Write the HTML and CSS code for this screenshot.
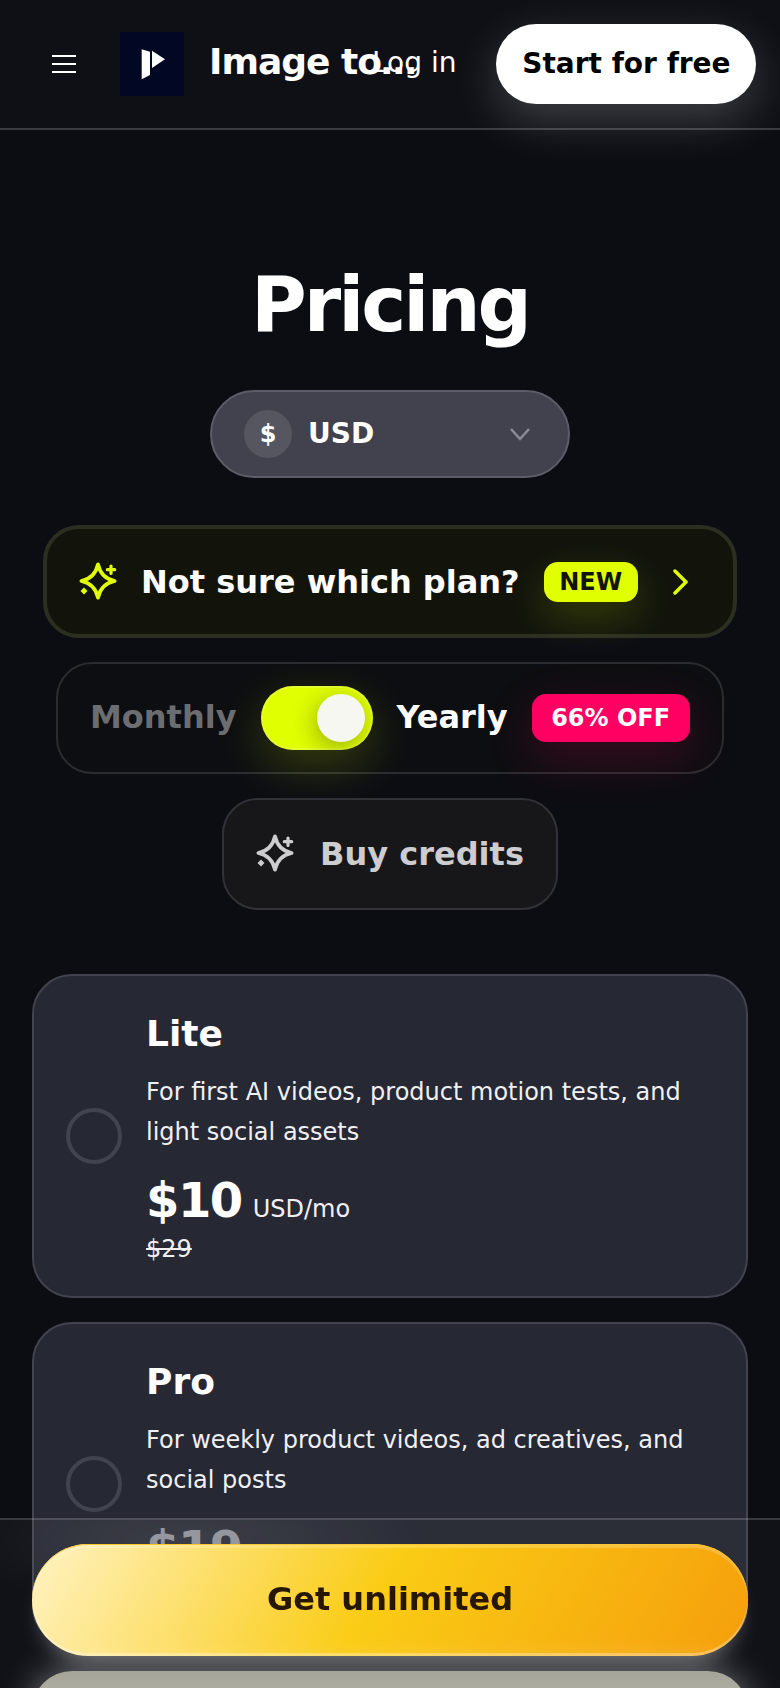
FILE: index.html
```html
<!DOCTYPE html>
<html>
<head>
  <title>Pricing</title>
  <link rel="stylesheet" href="styles.css">
</head>
<body>

  <header class="site-header">
    <div class="header-left">
      <button class="menu-btn" aria-label="Menu">
        <span></span><span></span><span></span>
      </button>
      <div class="logo">
        <svg width="36" height="36" viewBox="0 0 36 36">
          <path d="M7.700 3.300L16 5.700V29L7.700 33.300z" fill="#fff"/>
          <path d="M18 4.700L31 13.300 18 22z" fill="#fff"/>
        </svg>
      </div>
      <span class="brand">Image to video</span>
    </div>
    <div class="header-right">
      <a class="login">Log in</a>
      <a class="start-btn">Start for free</a>
    </div>
  </header>

  <main class="pricing">
    <h1>Pricing</h1>

    <div class="currency">
      <span class="currency-sign">$</span>
      <span class="currency-code">USD</span>
      <svg class="currency-arrow" width="24" height="14" viewBox="0 0 24 14">
        <path d="M3 2l9 10 9-10" fill="none" stroke="#8b8c95" stroke-width="2.500"/>
      </svg>
    </div>

    <div class="plan-finder">
      <svg class="sparkle" width="40" height="40" viewBox="0 0 40 40">
        <path d="M19 2.400C21 11.500 26.500 17 35.600 19 26.500 21 21 26.500 19 35.600 17 26.500 11.500 21 2.400 19 11.500 17 17 11.500 19 2.400Z" fill="none" stroke="currentColor" stroke-width="3.800" stroke-linejoin="round"/>
        <path d="M32 4v7.400M28.300 7.700h7.400" stroke="currentColor" stroke-width="3.200" stroke-linecap="round"/>
        <path d="M5 25.500L8.500 29 5 32.500 1.500 29z" fill="currentColor"/>
      </svg>
      <span class="plan-finder-text">Not sure which plan?</span>
      <span class="new-badge">NEW</span>
      <svg class="plan-finder-arrow" width="16" height="26" viewBox="0 0 16 26">
        <path d="M2 2l11 11L2 24" fill="none" stroke="#e0ff00" stroke-width="3.500" stroke-linecap="round" stroke-linejoin="round"/>
      </svg>
    </div>

    <div class="billing">
      <span class="billing-off">Monthly</span>
      <span class="toggle"><span class="toggle-knob"></span></span>
      <span class="billing-on">Yearly</span>
      <span class="off-badge">66% OFF</span>
    </div>

    <div class="credits">
      <svg class="sparkle" width="40" height="40" viewBox="0 0 40 40">
        <path d="M19 2.400C21 11.500 26.500 17 35.600 19 26.500 21 21 26.500 19 35.600 17 26.500 11.500 21 2.400 19 11.500 17 17 11.500 19 2.400Z" fill="none" stroke="currentColor" stroke-width="3.800" stroke-linejoin="round"/>
        <path d="M32 4v7.400M28.300 7.700h7.400" stroke="currentColor" stroke-width="3.200" stroke-linecap="round"/>
        <path d="M5 25.500L8.500 29 5 32.500 1.500 29z" fill="currentColor"/>
      </svg>
      <span>Buy credits</span>
    </div>

    <section class="plans">
      <div class="plan">
        <span class="radio"></span>
        <div class="plan-body">
          <h3>Lite</h3>
          <p>For first AI videos, product motion tests, and light social assets</p>
          <div class="price"><strong>$10</strong> <span>USD/mo</span></div>
          <div class="old-price">$29</div>
        </div>
      </div>
      <div class="plan plan-covered">
        <span class="radio"></span>
        <div class="plan-body">
          <h3>Pro</h3>
          <p>For weekly product videos, ad creatives, and social posts</p>
          <div class="price"><strong>$19</strong> <span>USD/mo</span></div>
        </div>
      </div>
    </section>
  </main>

  <!-- Sticky checkout bar -->
  <div class="checkout-bar">
    <a class="unlimited-btn">Get unlimited</a>
    <div class="second-btn"></div>
  </div>

</body>
</html>
```

FILE: styles.css
```css
* {
  box-sizing: border-box;
}

html, body {
  height: 1688px;
  overflow: hidden;
}

body {
  margin: 0;
  font-family: "DejaVu Sans", sans-serif;
  color: #fff;
  background: #0c0d13;
}

.site-header {
  height: 130px;
  padding: 24px 24px 24px 52px;
  display: flex;
  align-items: flex-start;
  justify-content: space-between;
  background: #0f1016;
  border-bottom: 2px solid #3a3b42;
}

.header-left {
  display: flex;
  align-items: center;
  width: 368px;
  margin-right: -48px;
  padding-top: 8px;
}

.menu-btn {
  width: 24px;
  padding: 0;
  margin-right: 44px;
  background: none;
  border: none;
  display: flex;
  flex-direction: column;
  gap: 6px;
}

.menu-btn span {
  height: 2px;
  background: #fff;
}

.logo {
  width: 64px;
  height: 64px;
  flex: none;
  background: #020824;
  display: flex;
  align-items: center;
  justify-content: center;
  margin-right: 25px;
}

.brand {
  flex: 1;
  min-width: 0;
  font-size: 36px;
  font-weight: 700;
  letter-spacing: -1px;
  margin-top: -5px;
  white-space: nowrap;
  overflow: hidden;
  text-overflow: ellipsis;
}

.header-right {
  display: flex;
  align-items: center;
  gap: 40px;
  flex: none;
}

.login {
  font-size: 28px;
  margin-top: -3px;
}

.start-btn {
  width: 260px;
  height: 80px;
  padding-bottom: 2px;
  display: flex;
  align-items: center;
  justify-content: center;
  background: #fff;
  color: #000;
  border-radius: 40px;
  font-size: 28px;
  font-weight: 700;
  box-shadow: 0 16px 48px rgba(255,255,255,0.2);
}

.pricing {
  padding: 0 32px;
  display: flex;
  flex-direction: column;
  align-items: center;
}

h1 {
  margin: 130px 0 40px;
  font-size: 76px;
  line-height: 90px;
  font-weight: 700;
  letter-spacing: -3px;
}

.currency {
  width: 360px;
  height: 88px;
  padding: 0 36px 0 32px;
  display: flex;
  align-items: center;
  background: #41424e;
  border: 2px solid #5c5d68;
  border-radius: 44px;
}

.currency-sign {
  width: 48px;
  height: 48px;
  margin-right: 16px;
  border-radius: 50%;
  background: #55565f;
  display: flex;
  align-items: center;
  justify-content: center;
  font-size: 24px;
  font-weight: 700;
}

.currency-code {
  flex: 1;
  font-size: 28px;
  font-weight: 700;
  margin-top: -2px;
}

.plan-finder {
  width: 694px;
  height: 113px;
  margin-top: 47px;
  padding: 0 32px;
  display: flex;
  align-items: center;
  background: #12140c;
  border: 4px solid #2c2e20;
  border-radius: 36px;
  color: #e0ff00;
}

.sparkle {
  flex: none;
}

.plan-finder-text {
  margin-left: 22px;
  font-size: 32px;
  font-weight: 700;
  color: #fff;
  white-space: nowrap;
}

.new-badge {
  width: 94px;
  height: 40px;
  margin-left: 24px;
  display: flex;
  align-items: center;
  justify-content: center;
  background: #e0ff00;
  color: #12140c;
  border-radius: 14px;
  font-size: 24px;
  font-weight: 700;
  box-shadow: 0 16px 40px rgba(224,255,0,0.18);
}

.plan-finder-arrow {
  margin-left: 35px;
}

.billing {
  width: 668px;
  height: 112px;
  margin-top: 24px;
  padding: 0 32px;
  display: flex;
  align-items: center;
  background: #0d0e11;
  border: 2px solid #2b2c30;
  border-radius: 36px;
  font-size: 32px;
  font-weight: 700;
}

.billing-off {
  margin-top: -2px;
  color: #6c6d71;
}

.billing-on {
  margin-top: -2px;
}

.toggle {
  width: 112px;
  height: 64px;
  margin: 0 24px;
  padding: 8px;
  display: flex;
  justify-content: flex-end;
  overflow: hidden;
  background: #e0ff00;
  border-radius: 32px;
  box-shadow: 0 16px 48px rgba(224,255,0,0.2), inset 0 0 0 2px rgba(255,255,255,0.18);
}

.toggle-knob {
  width: 48px;
  height: 48px;
  border-radius: 50%;
  background: #f6f7f1;
  box-shadow: -2px 6px 24px rgba(0,0,0,0.32);
}

.off-badge {
  width: 158px;
  height: 48px;
  margin-left: 24px;
  display: flex;
  align-items: center;
  justify-content: center;
  background: #ff0062;
  border-radius: 14px;
  font-size: 24px;
  box-shadow: 0 16px 48px rgba(255,0,98,0.2);
}

.credits {
  height: 112px;
  width: 336px;
  margin-top: 24px;
  display: flex;
  align-items: center;
  justify-content: center;
  gap: 24px;
  background: #17171a;
  border: 2px solid #323236;
  border-radius: 36px;
  color: #cdcdd0;
  font-size: 32px;
  font-weight: 700;
}

.plans {
  width: 100%;
  margin-top: 64px;
  display: flex;
  flex-direction: column;
  gap: 24px;
}

.plan {
  min-height: 324px;
  padding: 0 32px;
  display: flex;
  align-items: center;
  gap: 24px;
  background: #262833;
  border: 2px solid #41434e;
  border-radius: 40px;
}

.radio {
  width: 56px;
  height: 56px;
  flex: none;
  border: 4px solid #41434e;
  border-radius: 50%;
}

.plan-body {
  align-self: flex-start;
  padding-top: 34px;
}

.plan-body h3 {
  margin: 0 0 14px;
  font-size: 36px;
  line-height: 48px;
  font-weight: 700;
}

.plan-body p {
  margin: 0 0 16px;
  font-size: 24px;
  line-height: 40px;
  color: #f0f0f3;
}

.price {
  display: flex;
  align-items: baseline;
  gap: 11px;
}

.price strong {
  font-size: 48px;
  line-height: 64px;
  letter-spacing: -1.5px;
}

.price span {
  font-size: 24px;
  color: #f0f0f3;
}

.old-price {
  margin-top: 1px;
  font-size: 24px;
  line-height: 32px;
  text-decoration: line-through;
  color: #f0f0f3;
}

/* price sits under the checkout bar, shows through dimmed */
.plan-covered .price strong {
  color: #8b8d96;
}

.checkout-bar {
  position: fixed;
  left: 0;
  right: 0;
  bottom: 0;
  height: 170px;
  padding: 24px 32px 0;
  overflow: hidden;
  background: radial-gradient(ellipse 240px 70px at 190px 20px, rgba(255,255,255,0.08), transparent), rgba(255,255,255,0.025);
  border-top: 2px solid rgba(255,255,255,0.16);
}

.unlimited-btn {
  height: 112px;
  padding-bottom: 2px;
  display: flex;
  align-items: center;
  justify-content: center;
  background: linear-gradient(120deg, #fff3c4 0%, #facc15 48%, #f59e0b 100%);
  border-radius: 56px;
  color: #271700;
  font-size: 32px;
  font-weight: 700;
  box-shadow:
    0 16px 24px -14px rgba(255,255,255,0.5),
    inset 0 1px 0 #fcc62f,
    inset 0 4px 0 rgba(255,255,255,0.2),
    inset 0 -3px 0 rgba(255,255,255,0.3);
}

.second-btn {
  height: 112px;
  margin-top: 15px;
  background: linear-gradient(#a5a499, #b4b3a8 30px);
  border-radius: 40px;
  box-shadow: 0 0 36px rgba(255,255,255,0.42);
}
```
